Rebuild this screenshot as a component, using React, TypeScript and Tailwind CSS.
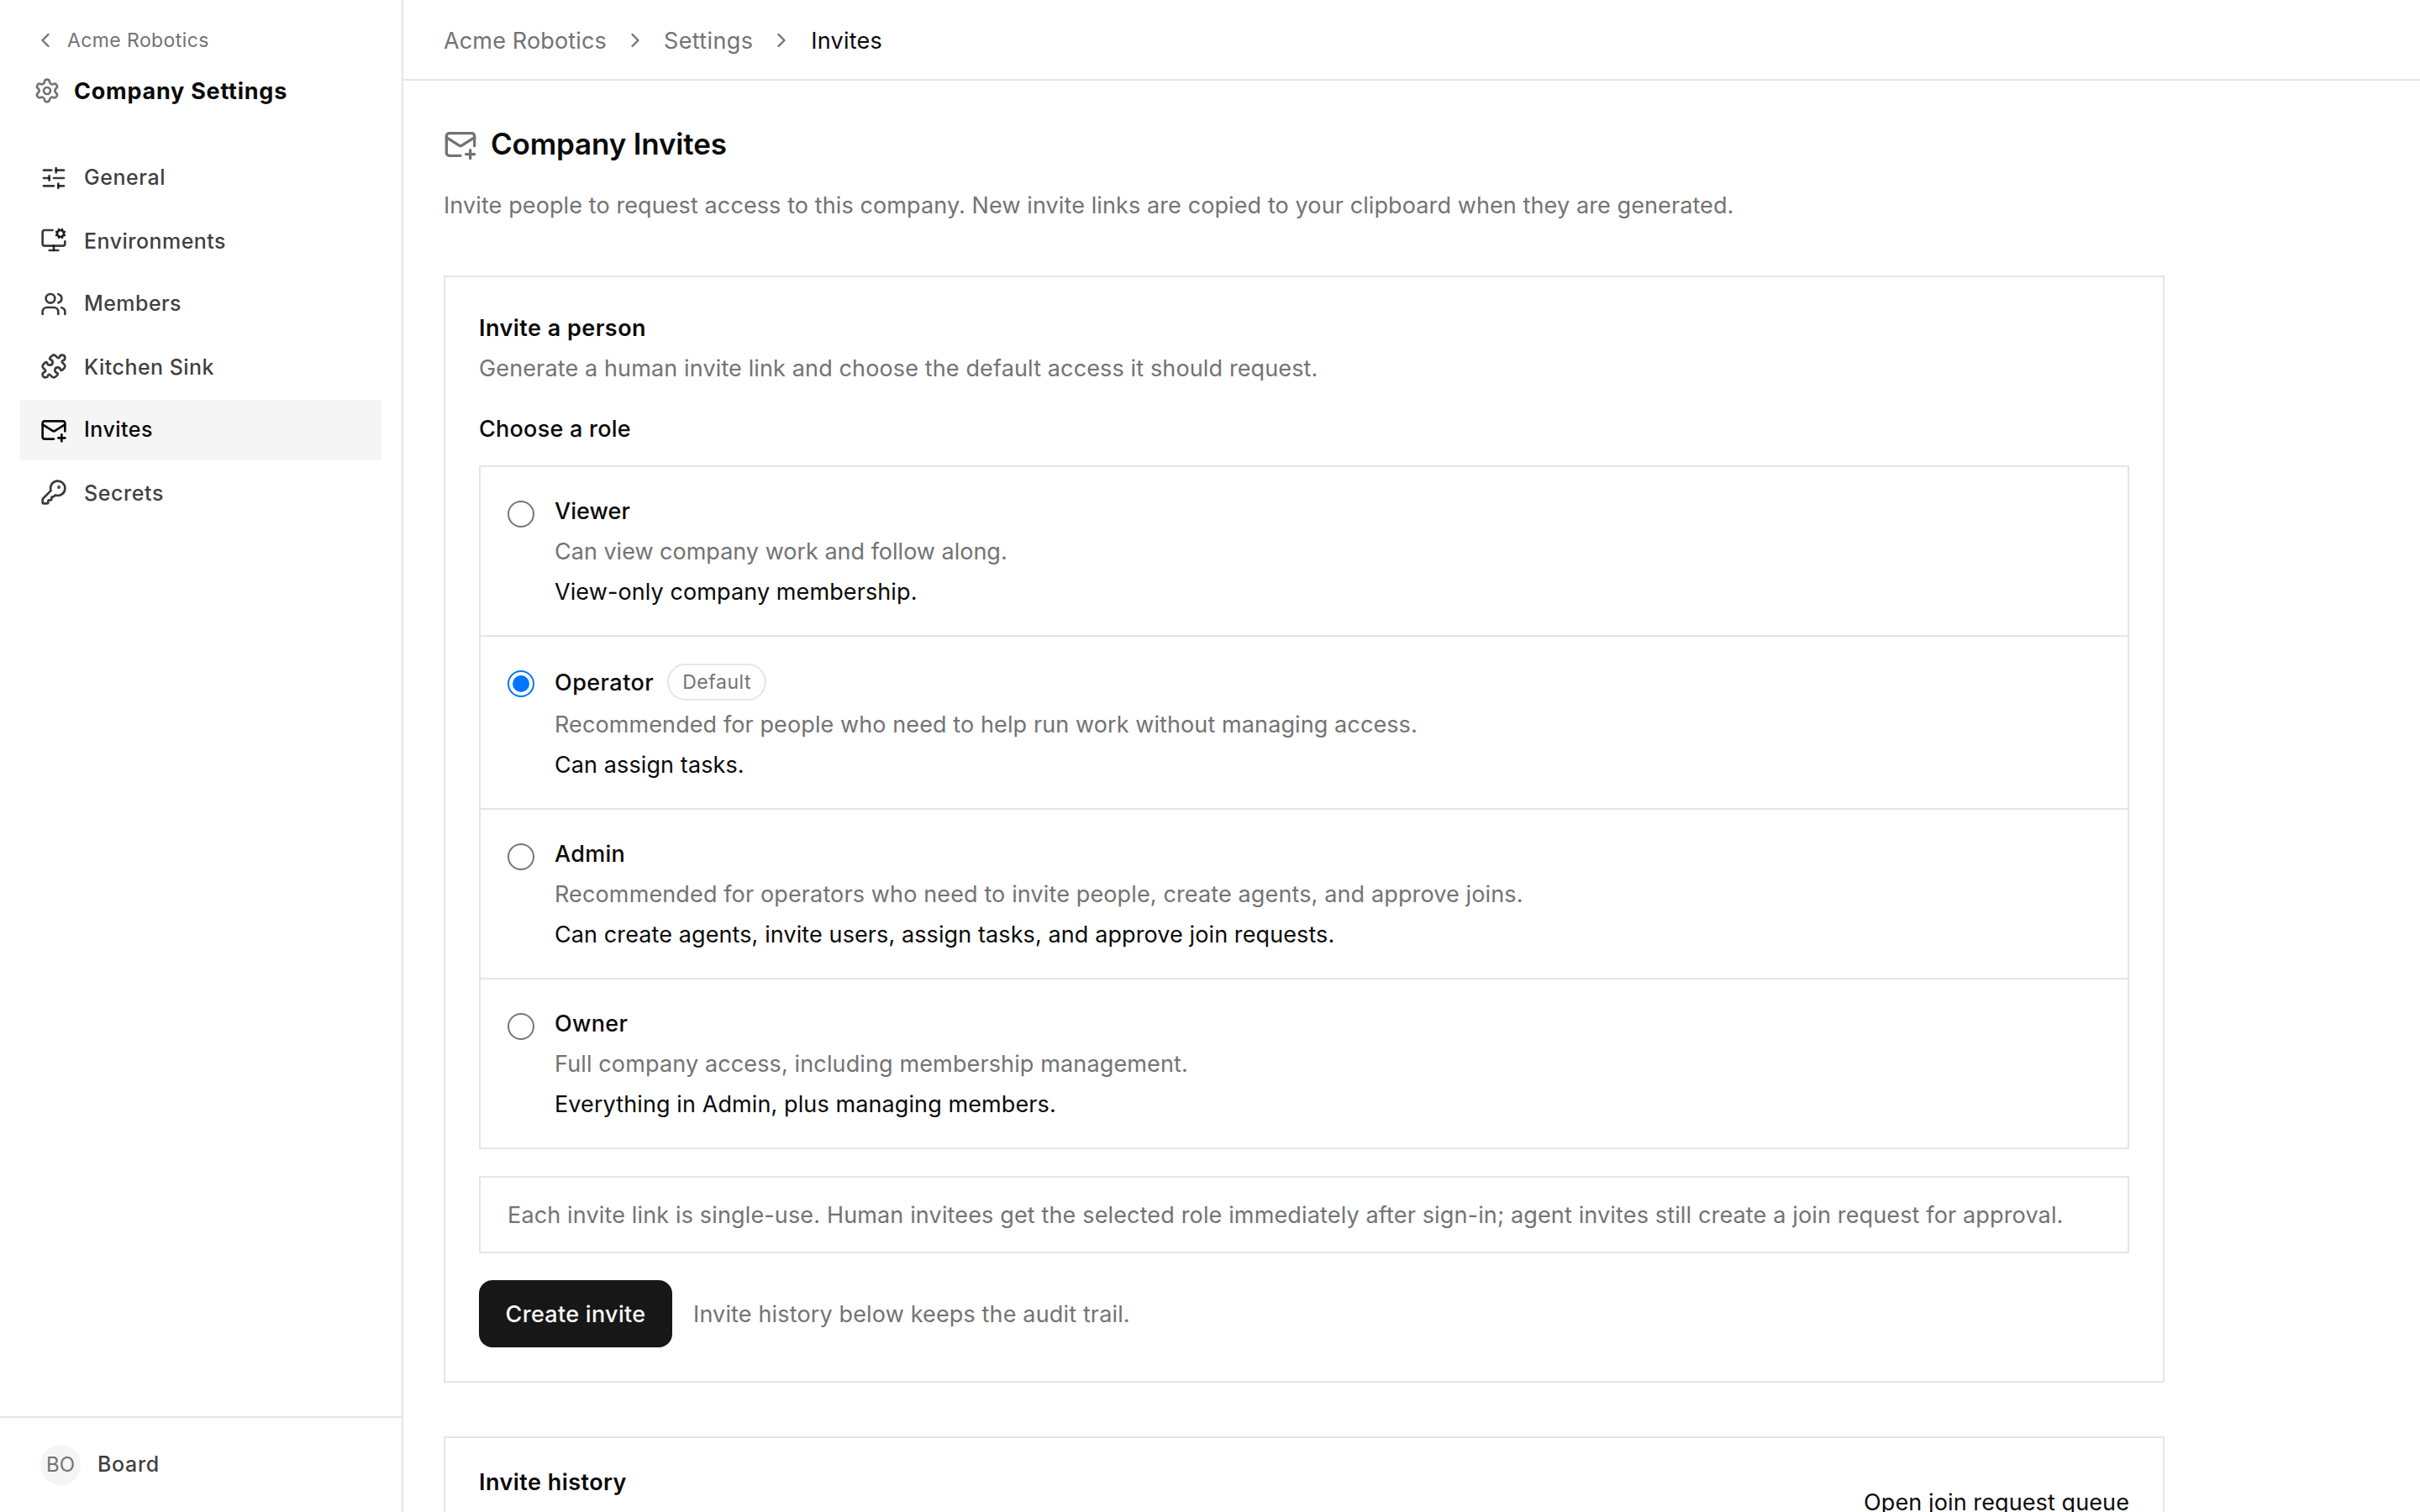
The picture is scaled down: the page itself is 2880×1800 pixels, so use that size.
import {
  ChevronLeft,
  ChevronRight,
  KeyRound,
  MailPlus,
  MonitorCog,
  Puzzle,
  Settings,
  SlidersHorizontal,
  Users,
} from 'lucide-react'
import clsx from 'clsx'

const navItems = [
  { label: 'General', icon: SlidersHorizontal, tracking: 'tracking-[0.55px]' },
  { label: 'Environments', icon: MonitorCog, tracking: 'tracking-[0.47px]' },
  { label: 'Members', icon: Users, tracking: 'tracking-[0.43px]' },
  { label: 'Kitchen Sink', icon: Puzzle, tracking: 'tracking-[0.47px]' },
  { label: 'Invites', icon: MailPlus, tracking: 'tracking-[0.49px]', active: true },
  { label: 'Secrets', icon: KeyRound, tracking: 'tracking-[0.58px]' },
]

const roles = [
  {
    name: 'Viewer',
    nameTracking: 'tracking-[0.06px]',
    description: 'Can view company work and follow along.',
    descriptionTracking: 'tracking-[0px]',
    access: 'View-only company membership.',
  },
  {
    name: 'Operator',
    nameTracking: 'tracking-[0.45px]',
    description: 'Recommended for people who need to help run work without managing access.',
    descriptionTracking: 'tracking-[0.1px]',
    access: 'Can assign tasks.',
    selected: true,
  },
  {
    name: 'Admin',
    nameTracking: 'tracking-[0.3px]',
    description: 'Recommended for operators who need to invite people, create agents, and approve joins.',
    descriptionTracking: 'tracking-[0.13px]',
    access: 'Can create agents, invite users, assign tasks, and approve join requests.',
  },
  {
    name: 'Owner',
    nameTracking: 'tracking-[0.3px]',
    description: 'Full company access, including membership management.',
    descriptionTracking: 'tracking-[0.13px]',
    access: 'Everything in Admin, plus managing members.',
  },
]

function Sidebar() {
  return (
    <aside className="flex w-[480px] shrink-0 flex-col border-r-2 border-[#e5e5e5]">
      <div className="flex flex-col gap-5 pt-7 pl-10">
        <a className="flex h-10 items-center gap-3 text-[23px] tracking-[0.4px] text-[#737373]">
          <ChevronLeft className="size-7" />
          <span className="pt-px">Acme Robotics</span>
        </a>
        <div className="flex h-10 items-center gap-4">
          <Settings className="size-8 text-[#737373]" />
          <span className="pt-0.5 text-[27px] font-bold tracking-[0.75px]">Company Settings</span>
        </div>
      </div>

      <nav className="flex flex-1 flex-col gap-[3px] px-6 pt-12">
        {navItems.map(({ label, icon: Icon, tracking, active }) => (
          <a
            key={label}
            className={clsx(
              'flex h-[72px] items-center gap-5 px-6 text-[25px] font-medium even:[&_span]:translate-y-px even:[&_svg]:-translate-y-px',
              active ? 'bg-[#f5f5f5] text-[#0a0a0a]' : 'text-[#0a0a0a]/80',
            )}
          >
            <Icon className="size-8" />
            <span className={clsx('block', tracking)}>{label}</span>
          </a>
        ))}
      </nav>

      <div className="flex h-[114px] items-center gap-5 border-t-2 border-[#e5e5e5] px-12">
        <div className="flex size-12 items-center justify-center rounded-full bg-[#f5f5f5] text-[24px] text-[#737373]">
          BO
        </div>
        <span className="text-[25px] font-medium tracking-[0.68px] text-[#0a0a0a]/80">Board</span>
      </div>
    </aside>
  )
}

function Breadcrumbs() {
  return (
    <header className="flex h-24 items-center gap-5 border-b-2 border-[#e5e5e5] px-12 pt-0.5 text-[27px] text-[#737373]">
      <span className="pt-0.5 tracking-[0.15px]">Acme Robotics</span>
      <ChevronRight className="size-7" />
      <span className="pt-0.5 tracking-[0.38px]">Settings</span>
      <ChevronRight className="size-7" />
      <span className="pt-0.5 pl-px tracking-[0.2px] text-[#0a0a0a]">Invites</span>
    </header>
  )
}

function Radio({ checked }: { checked?: boolean }) {
  return (
    <div
      role="radio"
      aria-checked={!!checked}
      className={clsx(
        'mt-2 flex size-8 shrink-0 items-center justify-center rounded-full border-2 bg-white',
        checked ? 'border-[#0075ff]' : 'border-[#767676]',
      )}
    >
      {checked && <div className="size-5 rounded-full bg-[#0075ff]" />}
    </div>
  )
}

function RoleList() {
  return (
    <div className="mt-[22px] divide-y-2 divide-[#e5e5e5] border-2 border-[#e5e5e5]">
      {roles.map((role) => (
        <label key={role.name} className="flex gap-6 px-8 pt-8 pb-[30px]">
          <Radio checked={role.selected} />
          <div className="flex flex-col gap-1.5">
            <div className="flex items-center gap-4">
              <span className={clsx('font-medium', role.nameTracking)}>{role.name}</span>
              {role.selected && (
                <span className="mb-0.5 flex h-11 items-center rounded-full border-2 border-[#e5e5e5] px-4 text-[23px] tracking-[0.55px] text-[#737373]">
                  Default
                </span>
              )}
            </div>
            <p className={clsx('text-[#737373]', role.descriptionTracking)}>{role.description}</p>
            <p className="tracking-[0.1px]">{role.access}</p>
          </div>
        </label>
      ))}
    </div>
  )
}

function InviteCard() {
  return (
    <section className="mt-[62px] border-2 border-[#e5e5e5] p-10">
      <h2 className="font-semibold tracking-[0.46px]">Invite a person</h2>
      <p className="mt-1.5 tracking-[0.13px] text-[#737373]">
        Generate a human invite link and choose the default access it should request.
      </p>
      <div className="mt-[30px] font-medium tracking-[0.25px]">Choose a role</div>
      <RoleList />
      <div className="mt-8 border-2 border-[#e5e5e5] px-8 pt-6 pb-[22px] tracking-[0.146px] whitespace-nowrap text-[#737373]">
        Each invite link is single-use. Human invitees get the selected role immediately after sign-in; agent
        invites still create a join request for approval.
      </div>
      <div className="mt-8 flex items-center gap-6">
        <button className="h-20 w-[230px] rounded-2xl bg-[#171717] pt-0.5 font-medium tracking-[0.3px] text-[#fafafa]">
          Create invite
        </button>
        <span className="pt-0.5 pl-px tracking-[0.15px] text-[#737373]">
          Invite history below keeps the audit trail.
        </span>
      </div>
    </section>
  )
}

export default function App() {
  return (
    <div className="flex h-screen overflow-hidden bg-white font-['Inter',sans-serif] text-[#0a0a0a]">
      <Sidebar />
      <div className="min-w-0 flex-1">
        <Breadcrumbs />
        <main className="w-[2144px] p-12 text-[27px] leading-[42px]">
          <div className="flex h-14 items-center gap-4">
            <MailPlus className="size-10 text-[#737373]" />
            <h1 className="pb-0.5 text-[35px] font-semibold tracking-[-0.17px]">Company Invites</h1>
          </div>
          <p className="mt-6 tracking-[0.103px] text-[#737373]">
            Invite people to request access to this company. New invite links are copied to your clipboard when
            they are generated.
          </p>

          <InviteCard />

          <section className="mt-16 border-2 border-[#e5e5e5] px-10 py-8">
            <div className="flex h-[88px] items-center justify-between">
              <h2 className="self-start font-semibold tracking-[0.45px]">Invite history</h2>
              <a className="mt-0.5 tracking-[0.1px]">Open join request queue</a>
            </div>
          </section>
        </main>
      </div>
    </div>
  )
}
